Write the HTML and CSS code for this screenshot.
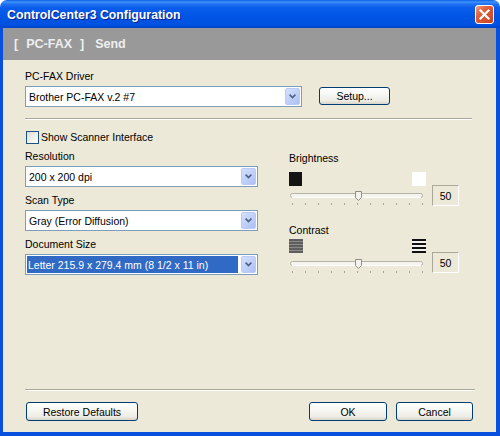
FILE: index.html
```html
<!DOCTYPE html>
<html>
<head>
<meta charset="utf-8">
<link rel="stylesheet" href="styles.css">
</head>
<body>
<div class="window">
  <div class="titlebar">
    <span class="title">ControlCenter3 Configuration</span>
    <span class="close">
      <svg width="19" height="19" viewBox="0 0 19 19">
        <defs>
          <linearGradient id="cg" x1="0" y1="0" x2="1" y2="1">
            <stop offset="0" stop-color="#F0A58A"/>
            <stop offset="0.35" stop-color="#E2603A"/>
            <stop offset="1" stop-color="#C63F1E"/>
          </linearGradient>
        </defs>
        <rect x="0.5" y="0.5" width="18" height="18" rx="2.5" fill="url(#cg)" stroke="#fff"/>
        <path d="M5.5 5.5 L13.5 13.5 M13.5 5.5 L5.5 13.5" stroke="#fff" stroke-width="2.2" stroke-linecap="square"/>
      </svg>
    </span>
  </div>
  <div class="frame">
    <div class="header">
      <span>[</span><span>PC-FAX</span><span>]</span><span class="send">Send</span>
    </div>
    <div class="content">
      <div class="label">PC-FAX Driver</div>
      <div class="driver-row">
        <div class="combo driver">
          <span class="combo-text">Brother PC-FAX v.2 #7</span>
          <span class="combo-btn"><svg width="7" height="5" viewBox="0 0 7 5"><polyline points="0.6,0.6 3.5,3.6 6.4,0.6" fill="none" stroke="#4D6185" stroke-width="1.6"/></svg></span>
        </div>
        <button class="btn setup">Setup...</button>
      </div>
      <div class="sep top-sep"></div>
      <div class="checkrow"><span class="check"></span><span>Show Scanner Interface</span></div>

      <div class="cols">
        <div class="col-left">
          <div class="label">Resolution</div>
          <div class="combo">
            <span class="combo-text">200 x 200 dpi</span>
            <span class="combo-btn"><svg width="7" height="5" viewBox="0 0 7 5"><polyline points="0.6,0.6 3.5,3.6 6.4,0.6" fill="none" stroke="#4D6185" stroke-width="1.6"/></svg></span>
          </div>
          <div class="label">Scan Type</div>
          <div class="combo">
            <span class="combo-text">Gray (Error Diffusion)</span>
            <span class="combo-btn"><svg width="7" height="5" viewBox="0 0 7 5"><polyline points="0.6,0.6 3.5,3.6 6.4,0.6" fill="none" stroke="#4D6185" stroke-width="1.6"/></svg></span>
          </div>
          <div class="label">Document Size</div>
          <div class="combo">
            <span class="combo-text sel">Letter 215.9 x 279.4 mm (8 1/2 x 11 in)</span>
            <span class="combo-btn"><svg width="7" height="5" viewBox="0 0 7 5"><polyline points="0.6,0.6 3.5,3.6 6.4,0.6" fill="none" stroke="#4D6185" stroke-width="1.6"/></svg></span>
          </div>
        </div>

        <div class="col-right">
          <div class="label bright-label">Brightness</div>
          <div class="slider-grid">
            <div class="icons">
              <span class="sq black"></span>
              <span class="sq white"></span>
            </div>
            <svg class="slider" width="137" height="21" viewBox="0 0 137 21">
              <rect x="1.5" y="7.5" width="132" height="4" rx="2" fill="#F5F4EF" stroke="#B5B2A6"/>
              <line x1="3" y1="11.5" x2="132" y2="11.5" stroke="#fff"/>
              <polygon points="66.5,5.5 72.5,5.5 72.5,11.5 69.5,14.5 66.5,11.5" fill="#F4F3EE" stroke="#8E8C85"/>
              <g stroke="#A7A597">
                <line x1="3.5" y1="17" x2="3.5" y2="19"/><line x1="16.5" y1="17" x2="16.5" y2="19"/>
                <line x1="29.5" y1="17" x2="29.5" y2="19"/><line x1="42.5" y1="17" x2="42.5" y2="19"/>
                <line x1="55.5" y1="17" x2="55.5" y2="19"/><line x1="68.5" y1="17" x2="68.5" y2="19"/>
                <line x1="81.5" y1="17" x2="81.5" y2="19"/><line x1="94.5" y1="17" x2="94.5" y2="19"/>
                <line x1="107.5" y1="17" x2="107.5" y2="19"/><line x1="120.5" y1="17" x2="120.5" y2="19"/>
                <line x1="133.5" y1="17" x2="133.5" y2="19"/>
              </g>
            </svg>
            <div class="valuebox">50</div>
          </div>

          <div class="label contrast-label">Contrast</div>
          <div class="slider-grid">
            <div class="icons">
              <svg width="14" height="14" viewBox="0 0 14 14">
                <rect x="0" y="0" width="14" height="14" fill="#8A8A8A"/>
                <rect x="0" y="0" width="14" height="2" fill="#5F5F5F"/>
                <rect x="0" y="3" width="14" height="2" fill="#5F5F5F"/>
                <rect x="0" y="6" width="14" height="2" fill="#5F5F5F"/>
                <rect x="0" y="9" width="14" height="2" fill="#5F5F5F"/>
                <rect x="0" y="12" width="14" height="2" fill="#5F5F5F"/>
              </svg>
              <svg width="14" height="14" viewBox="0 0 14 14">
                <rect x="0" y="0" width="14" height="14" fill="#F4F3EE"/>
                <rect x="0" y="0" width="14" height="2" fill="#111"/>
                <rect x="0" y="4" width="14" height="2" fill="#111"/>
                <rect x="0" y="8" width="14" height="2" fill="#111"/>
                <rect x="0" y="12" width="14" height="2" fill="#111"/>
              </svg>
            </div>
            <svg class="slider" width="137" height="21" viewBox="0 0 137 21">
              <rect x="1.5" y="8.5" width="132" height="4" rx="2" fill="#F5F4EF" stroke="#B5B2A6"/>
              <line x1="3" y1="12.5" x2="132" y2="12.5" stroke="#fff"/>
              <polygon points="66.5,6.5 72.5,6.5 72.5,12.5 69.5,15.5 66.5,12.5" fill="#F4F3EE" stroke="#8E8C85"/>
              <g stroke="#A7A597">
                <line x1="3.5" y1="18" x2="3.5" y2="20"/><line x1="16.5" y1="18" x2="16.5" y2="20"/>
                <line x1="29.5" y1="18" x2="29.5" y2="20"/><line x1="42.5" y1="18" x2="42.5" y2="20"/>
                <line x1="55.5" y1="18" x2="55.5" y2="20"/><line x1="68.5" y1="18" x2="68.5" y2="20"/>
                <line x1="81.5" y1="18" x2="81.5" y2="20"/><line x1="94.5" y1="18" x2="94.5" y2="20"/>
                <line x1="107.5" y1="18" x2="107.5" y2="20"/><line x1="120.5" y1="18" x2="120.5" y2="20"/>
                <line x1="133.5" y1="18" x2="133.5" y2="20"/>
              </g>
            </svg>
            <div class="valuebox">50</div>
          </div>
        </div>
      </div>

      <div class="footer">
        <div class="sep bottom-sep"></div>
        <div class="buttons">
          <button class="btn restore">Restore Defaults</button>
          <button class="btn ok">OK</button>
          <button class="btn cancel">Cancel</button>
        </div>
      </div>
    </div>
  </div>
</div>
</body>
</html>
```

FILE: styles.css
```css
html, body {
  margin: 0;
  padding: 0;
  background: #ffffff;
}

.window {
  width: 500px;
  height: 436px;
  display: flex;
  flex-direction: column;
  border-radius: 7px 7px 0 0;
  overflow: hidden;
  font-family: "Liberation Sans", Arial, sans-serif;
  font-size: 10.5px;
  color: #000;
}

.titlebar {
  height: 28px;
  flex: none;
  display: flex;
  align-items: center;
  padding: 1px 6px 0 7px;
  box-sizing: border-box;
  background: linear-gradient(#0A5DE8 0%, #3E92FA 7%, #2273F4 14%, #0A5DEB 28%, #0055E5 60%, #0052E0 88%, #0043CB 100%);
}

.title {
  color: #fff;
  font-weight: bold;
  font-size: 12.3px;
  text-shadow: 1px 1px 0 #0A1E8C;
  flex: 1;
}

.close {
  display: flex;
  margin-top: -1px;
}

.frame {
  flex: 1;
  display: flex;
  flex-direction: column;
  background: #ECE9D8;
  border-style: solid;
  border-color: #0A50DF;
  border-width: 0 4px 4px 3px;
}

.header {
  height: 32px;
  flex: none;
  background: #999999;
  display: flex;
  align-items: center;
  gap: 8px;
  padding-left: 11px;
  color: #EEEEEE;
  font-weight: bold;
  font-size: 12.5px;
}

.header .send {
  margin-left: 3px;
}

.content {
  flex: 1;
  display: flex;
  flex-direction: column;
  padding: 10px 24px 11px 22px;
}

.label {
  line-height: 13px;
  height: 13px;
  margin-bottom: 3px;
  white-space: nowrap;
}

.driver-row {
  display: flex;
  align-items: flex-start;
}

.combo {
  display: flex;
  height: 21px;
  box-sizing: border-box;
  border: 1px solid #7F9DB9;
  background: #fff;
  padding: 1px;
  margin-bottom: 7px;
}

.combo.driver {
  width: 277px;
  margin-bottom: 0;
}

.combo-text {
  flex: 1;
  display: flex;
  align-items: center;
  padding-left: 2px;
  white-space: nowrap;
  overflow: hidden;
}

.combo-text.sel {
  background: #316AC5;
  color: #fff;
  margin-right: 3px;
  padding-left: 1px;
}

.combo-btn {
  width: 15px;
  box-sizing: border-box;
  border: 1px solid #B9CBF5;
  border-radius: 2px;
  background: linear-gradient(135deg, #D4E0FD 0%, #BCCDF7 60%, #ACBFF3 100%);
  display: flex;
  align-items: center;
  justify-content: center;
}

.btn {
  font-family: inherit;
  font-size: 10.5px;
  color: #000;
  height: 19px;
  padding: 0;
  box-sizing: border-box;
  border: 1px solid #003C74;
  border-radius: 3px;
  background: linear-gradient(#FFFFFF 0%, #F6F6F2 45%, #EDECE5 80%, #D8D3C7 100%);
}

.btn.setup {
  width: 71px;
  height: 18px;
  margin-top: 1px;
  margin-left: 17px;
}

.sep {
  height: 0;
  border-top: 1px solid #ACA899;
  border-bottom: 1px solid #FFFFFF;
}

.top-sep {
  margin-top: 11px;
}

.checkrow {
  display: flex;
  align-items: center;
  gap: 2px;
  margin-top: 11px;
  height: 13px;
  line-height: 13px;
}

.check {
  width: 13px;
  height: 13px;
  box-sizing: border-box;
  margin-left: 1px;
  border: 1px solid #1C5180;
  background: linear-gradient(135deg, #DCDCD6 0%, #F2F2EE 60%, #FFFFFF 100%);
}

.cols {
  display: flex;
  margin-top: 6px;
}

.col-left {
  width: 233px;
}

.col-right {
  width: 170px;
  margin-left: 31px;
  padding-top: 2px;
}

.bright-label {
  margin-bottom: 7px;
}

.contrast-label {
  margin-top: 17px;
  margin-bottom: 2px;
}

.slider-grid {
  display: grid;
  grid-template-columns: 137px 27px;
  grid-template-rows: 14px 21px;
  column-gap: 6px;
}

.icons {
  grid-column: 1;
  grid-row: 1;
  display: flex;
  justify-content: space-between;
}

.sq {
  width: 14px;
  height: 14px;
  box-sizing: border-box;
}

.sq.black {
  width: 13px;
  background: #141414;
}

.sq.white {
  background: #FFFFFF;
}

.slider {
  grid-column: 1;
  grid-row: 2;
  display: block;
}

.valuebox {
  grid-column: 2;
  grid-row: 2;
  box-sizing: border-box;
  height: 21px;
  border-top: 1px solid #ACA899;
  border-left: 1px solid #ACA899;
  border-right: 1px solid #FFFFFF;
  border-bottom: 1px solid #FFFFFF;
  display: flex;
  align-items: center;
  justify-content: center;
  margin-top: -1px;
}

.footer {
  margin-top: auto;
}

.bottom-sep {
  margin-right: -3px;
}

.buttons {
  display: flex;
  margin-top: 11px;
  gap: 9px;
}

.btn.restore {
  width: 112px;
  margin-left: 1px;
  margin-right: auto;
}

.btn.ok {
  width: 78px;
}

.btn.cancel {
  width: 77px;
  margin-right: -1px;
}
```
